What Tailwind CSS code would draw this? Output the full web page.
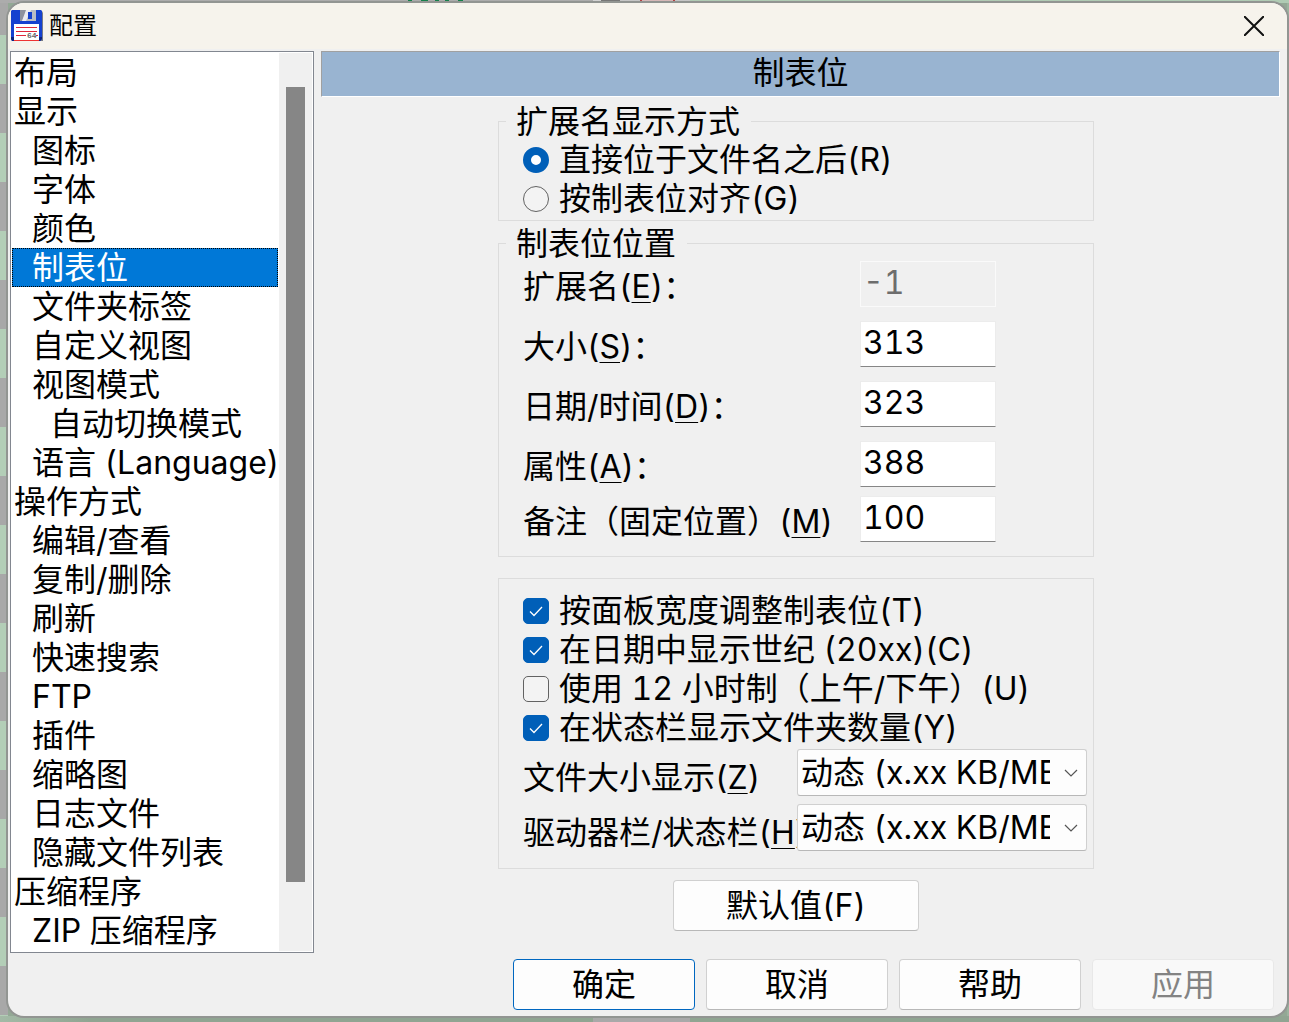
<!DOCTYPE html>
<html lang="zh-CN">
<head>
<meta charset="utf-8">
<meta name="viewport" content="width=device-width, initial-scale=1">
<title>配置</title>
<script src="https://cdn.jsdelivr.net/npm/@tailwindcss/browser@4"></script>
</head>
<body class="min-h-screen bg-[#93a895] font-['Inter','Noto_Sans_CJK_SC',sans-serif] text-[32px] leading-[39px] tabular-nums text-black">
<div class="grid min-h-screen grid-cols-[8px_minmax(0,1fr)_2px] grid-rows-[3px_auto_6px]">
  <!-- striped window behind the dialog -->
  <div class="col-span-3 bg-[linear-gradient(to_right,#acacac_0_408px,#15804a_408px_412px,#acacac_412px_421px,#15804a_421px_428px,#acacac_428px_435px,#15804a_435px_439px,#acacac_439px_445px,#15804a_445px_449px,#acacac_449px_458px,#15804a_458px_463px,#acacac_463px_593px,#d2d2d2_593px_601px,#777777_601px_620px,#c6c6c6_620px_640px,#b04444_640px_642px,#d6b8b8_642px_673px,#b04444_673px_675px,#c6c6c6_675px_690px,#b0cbb4_690px)]"></div>
  <div class="bg-[repeating-linear-gradient(to_bottom,#a8a8a8_0_32px,#b3ceb7_32px_81px,#a8a8a8_81px_98px)]"></div>

  <main class="relative flex flex-col overflow-hidden rounded-2xl bg-[#f0f0f0] shadow-[0_0_0_2px_#929592]">
    <header class="flex h-[46px] items-center bg-[#f6f3ec] pr-5 pb-px pl-[3px]">
      <svg class="size-8" viewBox="0 0 32 32" aria-hidden="true">
        <path d="M2 1h29l1 2v28H3z" fill="#777b86"/>
        <path d="M1 0h29l1 1v28l-2 2H1l-1-2V1z" fill="#1541cf"/>
        <path d="M0 27h3v4H1l-1-2zM28 27h3v2l-2 2h-1z" fill="#0b2380"/>
        <path d="M9 0h16v11H9z" fill="#b9bcc4"/>
        <path d="M9 0h7l-5 11H9z" fill="#8f939e"/>
        <path d="M15 0h5l-5 11h-4z" fill="#ececf0"/>
        <path d="M17 2h4v7h-4z" fill="#1541cf"/>
        <path d="M3 14h25v16H3z" fill="#fff"/>
        <path d="M3 30h25v1H3z" fill="#e33"/>
        <path d="M5 17.5h21M5 21.5h21M5 25.5h10M25 25.5h2" stroke="#e0273b" fill="none"/>
        <text x="16" y="28" class="font-['Liberation_Mono',monospace] text-[8px] font-bold" fill="#666">64</text>
      </svg>
      <h1 class="ml-[6px] text-2xl">配置</h1>
      <button type="button" aria-label="关闭" class="ml-auto grid size-[26px] place-items-center">
        <svg class="size-5" viewBox="0 0 20 20" fill="none" stroke="#111" stroke-width="2"><path d="M0 0l20 20M20 0L0 20"/></svg>
      </button>
    </header>

    <div class="flex gap-[7px] pt-[2px] pr-[7px] pl-[2px]">
      <nav class="flex w-[304px] shrink-0 justify-between border border-[#828790] bg-white p-px">
        <ul class="h-[898px] w-[266px] whitespace-nowrap [&_a]:block [&>li]:h-[39px] [&>li]:pl-5">
          <li class="pl-[2px]!"><a href="#">布局</a></li>
          <li class="pl-[2px]!"><a href="#">显示</a></li>
          <li><a href="#">图标</a></li>
          <li><a href="#">字体</a></li>
          <li><a href="#">颜色</a></li>
          <li class="bg-[#0078d7] text-white outline-1 -outline-offset-1 outline-dotted outline-black"><a href="#" aria-current="page">制表位</a></li>
          <li><a href="#">文件夹标签</a></li>
          <li><a href="#">自定义视图</a></li>
          <li><a href="#">视图模式</a></li>
          <li class="pl-[38px]!"><a href="#">自动切换模式</a></li>
          <li><a href="#">语言 (Language)</a></li>
          <li class="pl-[2px]!"><a href="#">操作方式</a></li>
          <li><a href="#">编辑/查看</a></li>
          <li><a href="#">复制/删除</a></li>
          <li><a href="#">刷新</a></li>
          <li><a href="#">快速搜索</a></li>
          <li><a href="#">FTP</a></li>
          <li><a href="#">插件</a></li>
          <li><a href="#">缩略图</a></li>
          <li><a href="#">日志文件</a></li>
          <li><a href="#">隐藏文件列表</a></li>
          <li class="pl-[2px]!"><a href="#">压缩程序</a></li>
          <li><a href="#">ZIP 压缩程序</a></li>
        </ul>
        <div class="flex w-[33px] flex-col bg-[#f0f0f0] px-[7px] pt-[34px] pb-[69px]">
          <div class="flex-1 bg-[#868686]"></div>
        </div>
      </nav>

      <form id="settings" class="flex min-w-0 flex-1 flex-col">
        <h2 class="h-[46px] border border-t-[#a0a0a0] border-r-white border-b-white border-l-[#a0a0a0] bg-[#99b4d1] text-center leading-[42px]">制表位</h2>
        <div class="mr-[9px] flex flex-col items-center pt-[6px]">

          <fieldset class="w-full max-w-[596px] border border-[#dcdcdc] pt-px pb-[2px] pl-6">
            <legend class="-ml-[17px] h-9 pr-[11px] pl-[10px] leading-[38px]">扩展名显示方式</legend>
            <label class="flex items-center gap-[10px]">
              <input type="radio" name="ext" checked class="size-[26px] appearance-none rounded-full border border-[#626262] bg-[#f3f3f3] checked:border-8 checked:border-[#005fb8] checked:bg-white">直接位于文件名之后(R)
            </label>
            <label class="flex items-center gap-[10px]">
              <input type="radio" name="ext" class="size-[26px] appearance-none rounded-full border border-[#626262] bg-[#f3f3f3] checked:border-8 checked:border-[#005fb8] checked:bg-white">按制表位对齐(G)
            </label>
          </fieldset>

          <fieldset class="mt-1 w-full max-w-[596px] border border-[#dcdcdc] pb-[14px] pl-6">
            <legend class="-ml-[17px] h-9 pr-[11px] pl-[10px] leading-[38px]">制表位位置</legend>
            <div class="grid grid-cols-[337px_136px] items-end gap-y-[14px] leading-10 [&>input]:h-[46px] [&>input]:border [&>input]:border-[#ececec] [&>input]:border-b-[#868686] [&>input]:bg-white [&>input]:px-[2px] [&>input]:pb-[3px]">
              <label for="t-ext">扩展名(<u class="underline decoration-1 underline-offset-4">E</u>)：</label>
              <input id="t-ext" value="-1" disabled class="border-[#fafafa]! bg-[#f0f0f0]! text-[#6d6d6d]">
              <label for="t-size">大小(<u class="underline decoration-1 underline-offset-4">S</u>)：</label>
              <input id="t-size" value="313">
              <label for="t-date">日期/时间(<u class="underline decoration-1 underline-offset-4">D</u>)：</label>
              <input id="t-date" value="323">
              <label for="t-attr">属性(<u class="underline decoration-1 underline-offset-4">A</u>)：</label>
              <input id="t-attr" value="388">
            </div>
            <div class="mt-[9px] grid grid-cols-[337px_136px] items-end leading-10">
              <label for="t-note" class="whitespace-nowrap">备注（固定位置）(<u class="underline decoration-1 underline-offset-4">M</u>)</label>
              <input id="t-note" value="100" class="h-[46px] border border-[#ececec] border-b-[#868686] bg-white px-[2px] pb-[3px]">
            </div>
          </fieldset>

          <fieldset class="mt-[21px] w-full max-w-[596px] border border-[#dcdcdc] pt-3 pr-[6px] pb-[17px] pl-6 whitespace-nowrap">
            <label class="flex items-center gap-[10px]">
              <span class="grid size-[26px] place-items-center [&>*]:col-start-1 [&>*]:row-start-1">
                <input type="checkbox" checked class="peer size-[26px] appearance-none rounded-[5px] border border-[#626262] bg-[#f3f3f3] checked:border-[#005fb8] checked:bg-[#005fb8]">
                <svg class="pointer-events-none hidden size-[14px] peer-checked:block" viewBox="0 0 14 14" fill="none" stroke="#fff" stroke-width="1.3"><path d="M1 7.5l4 4 8-8.5"/></svg>
              </span>按面板宽度调整制表位(T)
            </label>
            <label class="flex items-center gap-[10px]">
              <span class="grid size-[26px] place-items-center [&>*]:col-start-1 [&>*]:row-start-1">
                <input type="checkbox" checked class="peer size-[26px] appearance-none rounded-[5px] border border-[#626262] bg-[#f3f3f3] checked:border-[#005fb8] checked:bg-[#005fb8]">
                <svg class="pointer-events-none hidden size-[14px] peer-checked:block" viewBox="0 0 14 14" fill="none" stroke="#fff" stroke-width="1.3"><path d="M1 7.5l4 4 8-8.5"/></svg>
              </span>在日期中显示世纪 (20xx)(C)
            </label>
            <label class="flex items-center gap-[10px]">
              <span class="grid size-[26px] place-items-center [&>*]:col-start-1 [&>*]:row-start-1">
                <input type="checkbox" class="peer size-[26px] appearance-none rounded-[5px] border border-[#626262] bg-[#f3f3f3] checked:border-[#005fb8] checked:bg-[#005fb8]">
                <svg class="pointer-events-none hidden size-[14px] peer-checked:block" viewBox="0 0 14 14" fill="none" stroke="#fff" stroke-width="1.3"><path d="M1 7.5l4 4 8-8.5"/></svg>
              </span>使用 12 小时制（上午/下午）(U)
            </label>
            <label class="flex items-center gap-[10px]">
              <span class="grid size-[26px] place-items-center [&>*]:col-start-1 [&>*]:row-start-1">
                <input type="checkbox" checked class="peer size-[26px] appearance-none rounded-[5px] border border-[#626262] bg-[#f3f3f3] checked:border-[#005fb8] checked:bg-[#005fb8]">
                <svg class="pointer-events-none hidden size-[14px] peer-checked:block" viewBox="0 0 14 14" fill="none" stroke="#fff" stroke-width="1.3"><path d="M1 7.5l4 4 8-8.5"/></svg>
              </span>在状态栏显示文件夹数量(Y)
            </label>
            <div class="mt-[2px] grid grid-cols-[minmax(0,1fr)_290px] items-end gap-y-2">
              <label for="s-file" class="leading-9">文件大小显示(<u class="underline decoration-1 underline-offset-4">Z</u>)</label>
              <div class="relative">
                <select id="s-file" class="block h-[47px] w-full appearance-none rounded-[3px] border border-[#d0d0d0] border-b-[#b8b8b8] bg-[#fdfdfd] pr-[36px] pl-[3px]"><option>动态 (x.xx KB/MB/GB)</option></select>
                <svg class="pointer-events-none absolute top-5 right-[9px] h-2 w-[14px]" viewBox="0 0 14 8" fill="none" stroke="#555" stroke-width="1.2"><path d="M1 1l6 6 6-6"/></svg>
              </div>
              <label for="s-drive" class="leading-9">驱动器栏/状态栏(<u class="underline decoration-1 underline-offset-4">H</u>)</label>
              <div class="relative">
                <select id="s-drive" class="block h-[47px] w-full appearance-none rounded-[3px] border border-[#d0d0d0] border-b-[#b8b8b8] bg-[#fdfdfd] pr-[36px] pl-[3px]"><option>动态 (x.xx KB/MB/GB)</option></select>
                <svg class="pointer-events-none absolute top-5 right-[9px] h-2 w-[14px]" viewBox="0 0 14 8" fill="none" stroke="#555" stroke-width="1.2"><path d="M1 1l6 6 6-6"/></svg>
              </div>
            </div>
          </fieldset>

          <button type="reset" class="mt-[11px] h-[51px] w-[246px] rounded border border-[#d0d0d0] border-b-[#b8b8b8] bg-[#fdfdfd]">默认值(F)</button>
        </div>
      </form>
    </div>

    <footer class="flex justify-end gap-[11px] pt-[6px] pr-[13px] pb-[6px]">
      <button type="submit" form="settings" class="h-[51px] w-[182px] rounded border border-[#0067c0] bg-[#fdfdfd]">确定</button>
      <button type="button" class="h-[51px] w-[182px] rounded border border-[#d0d0d0] border-b-[#b8b8b8] bg-[#fdfdfd]">取消</button>
      <button type="button" class="h-[51px] w-[182px] rounded border border-[#d0d0d0] border-b-[#b8b8b8] bg-[#fdfdfd]">帮助</button>
      <button type="button" disabled class="h-[51px] w-[182px] rounded border border-[#e8e8e8] bg-[#f9f9f9] text-[#838383]">应用</button>
    </footer>
  </main>

  <div class="bg-[#9db3a0]"></div>
  <div class="col-span-3 bg-[linear-gradient(to_right,#a3baa6_0,#90a592_90px_593px,#a9a9a9_593px_690px,#90a592_690px)]"></div>
</div>
</body>
</html>
